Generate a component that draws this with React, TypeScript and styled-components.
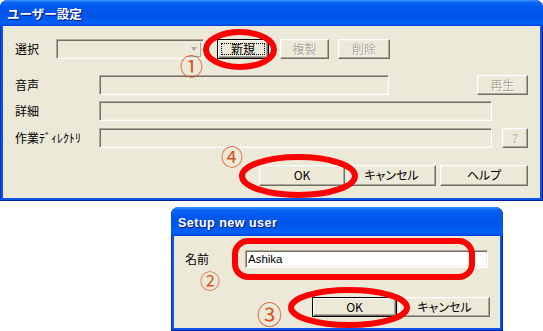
import styled, { createGlobalStyle, css } from "styled-components";

const GlobalStyle = createGlobalStyle`
  html, body {
    margin: 0;
    padding: 0;
    background: #ffffff;
  }
  body {
    font-family: "Noto Sans CJK JP", "DejaVu Sans", sans-serif;
    font-size: 12px;
    color: #000000;
  }
`;

const Sheet = styled.div`
  position: relative;
  width: 543px;
  height: 331px;
  overflow: hidden;
  display: flex;
  flex-direction: column;
  align-items: flex-start;
`;

const Window = styled.div<{ $width: number; $offset?: number; $top?: number }>`
  width: ${(p) => p.$width}px;
  margin-left: ${(p) => p.$offset ?? 0}px;
  margin-top: ${(p) => p.$top ?? 0}px;
  display: flex;
  flex-direction: column;
  background: #0a55e4;
  border-radius: 8px 8px 0 0;
  box-shadow: inset 1px 0 #0831d9, inset -1px 0 #001ea0, inset 0 -1px #001ea0;
  overflow: hidden;
`;

const TitleBar = styled.div<{ $height: number; $latin?: boolean }>`
  height: ${(p) => p.$height}px;
  display: flex;
  align-items: center;
  padding: 0 7px;
  background: linear-gradient(
    to bottom,
    #3d95ff 0%,
    #0a66f4 10%,
    #0058ee 30%,
    #0054e8 60%,
    #0060f8 88%,
    #0055e8 94%,
    #003dd7 100%
  );
  color: #ffffff;
  font-weight: bold;
  text-shadow: 1px 1px #0a1883;
  ${(p) =>
    p.$latin
      ? css`
          font-family: "Liberation Sans", Arial, sans-serif;
          font-size: 12.5px;
          letter-spacing: 0.5px;
          padding-top: 3px;
        `
      : css`
          font-family: "Noto Sans CJK JP", sans-serif;
          font-size: 12.5px;
        `}
`;

const Body = styled.div<{ $pad: string }>`
  margin: 0 3px 3px;
  background: #ece9d8;
  padding: ${(p) => p.$pad};
  display: flex;
  flex-direction: column;
`;

const Row = styled.div<{ $top?: number; $height?: number }>`
  display: flex;
  align-items: center;
  height: ${(p) => p.$height ?? 20}px;
  margin-top: ${(p) => p.$top ?? 0}px;
`;

const Label = styled.div<{ $width: number }>`
  width: ${(p) => p.$width}px;
  flex: none;
  white-space: nowrap;
  line-height: 1;
`;

const sunken = css`
  box-sizing: border-box;
  border: 1px solid;
  border-color: #aca899 #ffffff #ffffff #aca899;
  box-shadow: inset 1px 1px #716f64, inset -1px -1px #f1efe2;
`;

const Field = styled.div<{ $width: number; $height?: number; $white?: boolean }>`
  ${sunken};
  width: ${(p) => p.$width}px;
  height: ${(p) => p.$height ?? 20}px;
  flex: none;
  background: ${(p) => (p.$white ? "#ffffff" : "#ece9d8")};
  display: flex;
  align-items: center;
  justify-content: space-between;
  padding: 0 2px 0 2px;
  font-family: "Liberation Sans", Arial, sans-serif;
  font-size: 11.5px;
`;

const DropArrow = styled.div`
  width: 15px;
  height: 15px;
  box-sizing: border-box;
  display: flex;
  align-items: center;
  justify-content: center;
  border: 1px solid;
  border-color: #f1efe2 #aca899 #aca899 #f1efe2;

  &::after {
    content: "";
    border-left: 3.5px solid transparent;
    border-right: 3.5px solid transparent;
    border-top: 4px solid #aca899;
  }
`;

const Button = styled.button<{
  $width: number;
  $left?: number;
  $default?: boolean;
  $focus?: boolean;
  $height?: number;
}>`
  box-sizing: border-box;
  width: ${(p) => p.$width}px;
  height: ${(p) => p.$height ?? 20}px;
  margin-left: ${(p) => (p.$left === undefined ? "0" : `${p.$left}px`)};
  flex: none;
  position: relative;
  padding: 0 0 1px;
  background: #ece9d8;
  font-family: "Noto Sans CJK JP", sans-serif;
  font-feature-settings: "palt";
  font-size: 12px;
  line-height: 1;
  color: ${(p) => (p.disabled ? "#aca899" : "#000000")};
  text-shadow: ${(p) => (p.disabled ? "1px 1px #ffffff" : "none")};
  border: 1px solid;
  border-color: #ffffff #716f64 #716f64 #ffffff;
  box-shadow: inset -1px -1px #aca899, inset 1px 1px #f1efe2;
  ${(p) =>
    p.$default &&
    css`
      border: 1px solid #000000;
      box-shadow: inset 1px 1px #ffffff, inset -1px -1px #716f64,
        inset -2px -2px #aca899;
    `}
  ${(p) =>
    p.$focus &&
    css`
      &::after {
        content: "";
        position: absolute;
        inset: 3px;
        border: 1px dotted #000000;
      }
    `}
`;

const Spacer = styled.div`
  flex: 1;
`;

const Marks = styled.svg`
  position: absolute;
  left: 0;
  top: 0;
  pointer-events: none;
`;

const Marker = styled.span<{ $x: number; $y: number; $size: number }>`
  position: absolute;
  left: ${(p) => p.$x}px;
  top: ${(p) => p.$y}px;
  font-family: "Noto Sans CJK JP", sans-serif;
  font-size: ${(p) => p.$size}px;
  line-height: 1;
  color: #d8561c;
  pointer-events: none;
`;

export default function App() {
  return (
    <>
      <GlobalStyle />
      <Sheet>
        <Window $width={543}>
          <TitleBar $height={28}>ユーザー設定</TitleBar>
          <Body $pad="13px 12px 12px 12px">
            <Row>
              <Label $width={41}>選択</Label>
              <Field $width={148}>
                <span />
                <DropArrow />
              </Field>
              <Button $width={52} $left={13} $default $focus>
                新規
              </Button>
              <Button $width={49} $left={11} disabled>
                複製
              </Button>
              <Button $width={52} $left={9} disabled>
                削除
              </Button>
            </Row>
            <Row $top={16}>
              <Label $width={84}>音声</Label>
              <Field $width={290} />
              <Spacer />
              <Button $width={51} disabled>
                再生
              </Button>
            </Row>
            <Row $top={6}>
              <Label $width={84}>詳細</Label>
              <Field $width={393} />
            </Row>
            <Row $top={7}>
              <Label $width={84}>作業ﾃﾞｨﾚｸﾄﾘ</Label>
              <Field $width={393} />
              <Spacer />
              <Button $width={26} disabled>
                ?
              </Button>
            </Row>
            <Row $top={17} $height={21}>
              <Spacer />
              <Button $width={86} $height={21}>
                OK
              </Button>
              <Button $width={89} $height={21} $left={2}>
                キャンセル
              </Button>
              <Button $width={88} $height={21} $left={4}>
                ヘルプ
              </Button>
            </Row>
          </Body>
        </Window>

        <Window $width={332} $offset={171} $top={6}>
          <TitleBar $height={27} $latin>
            Setup new user
          </TitleBar>
          <Body $pad="14px 10px 11px 11px">
            <Row $height={18}>
              <Label $width={60}>名前</Label>
              <Field $width={243} $height={18} $white>
                Ashika
              </Field>
            </Row>
            <Row $top={29}>
              <Spacer />
              <Button $width={85} $default>
                OK
              </Button>
              <Button $width={91} $left={2}>
                キャンセル
              </Button>
            </Row>
          </Body>
        </Window>

        <Marks width={543} height={331} viewBox="0 0 543 331">
          <g fill="none" stroke="#ff0000" strokeWidth={6}>
            <ellipse cx={240} cy={49.5} rx={34} ry={17.5} />
            <ellipse cx={298.5} cy={176} rx={56.5} ry={19} />
            <rect x={235} y={241} width={237} height={36} rx={13} />
            <ellipse cx={349} cy={307.5} rx={58} ry={17.5} />
          </g>
        </Marks>
        <Marker $x={180} $y={54} $size={23}>
          ①
        </Marker>
        <Marker $x={221} $y={144} $size={22}>
          ④
        </Marker>
        <Marker $x={200} $y={271} $size={20}>
          ②
        </Marker>
        <Marker $x={257} $y={301} $size={25}>
          ③
        </Marker>
      </Sheet>
    </>
  );
}
